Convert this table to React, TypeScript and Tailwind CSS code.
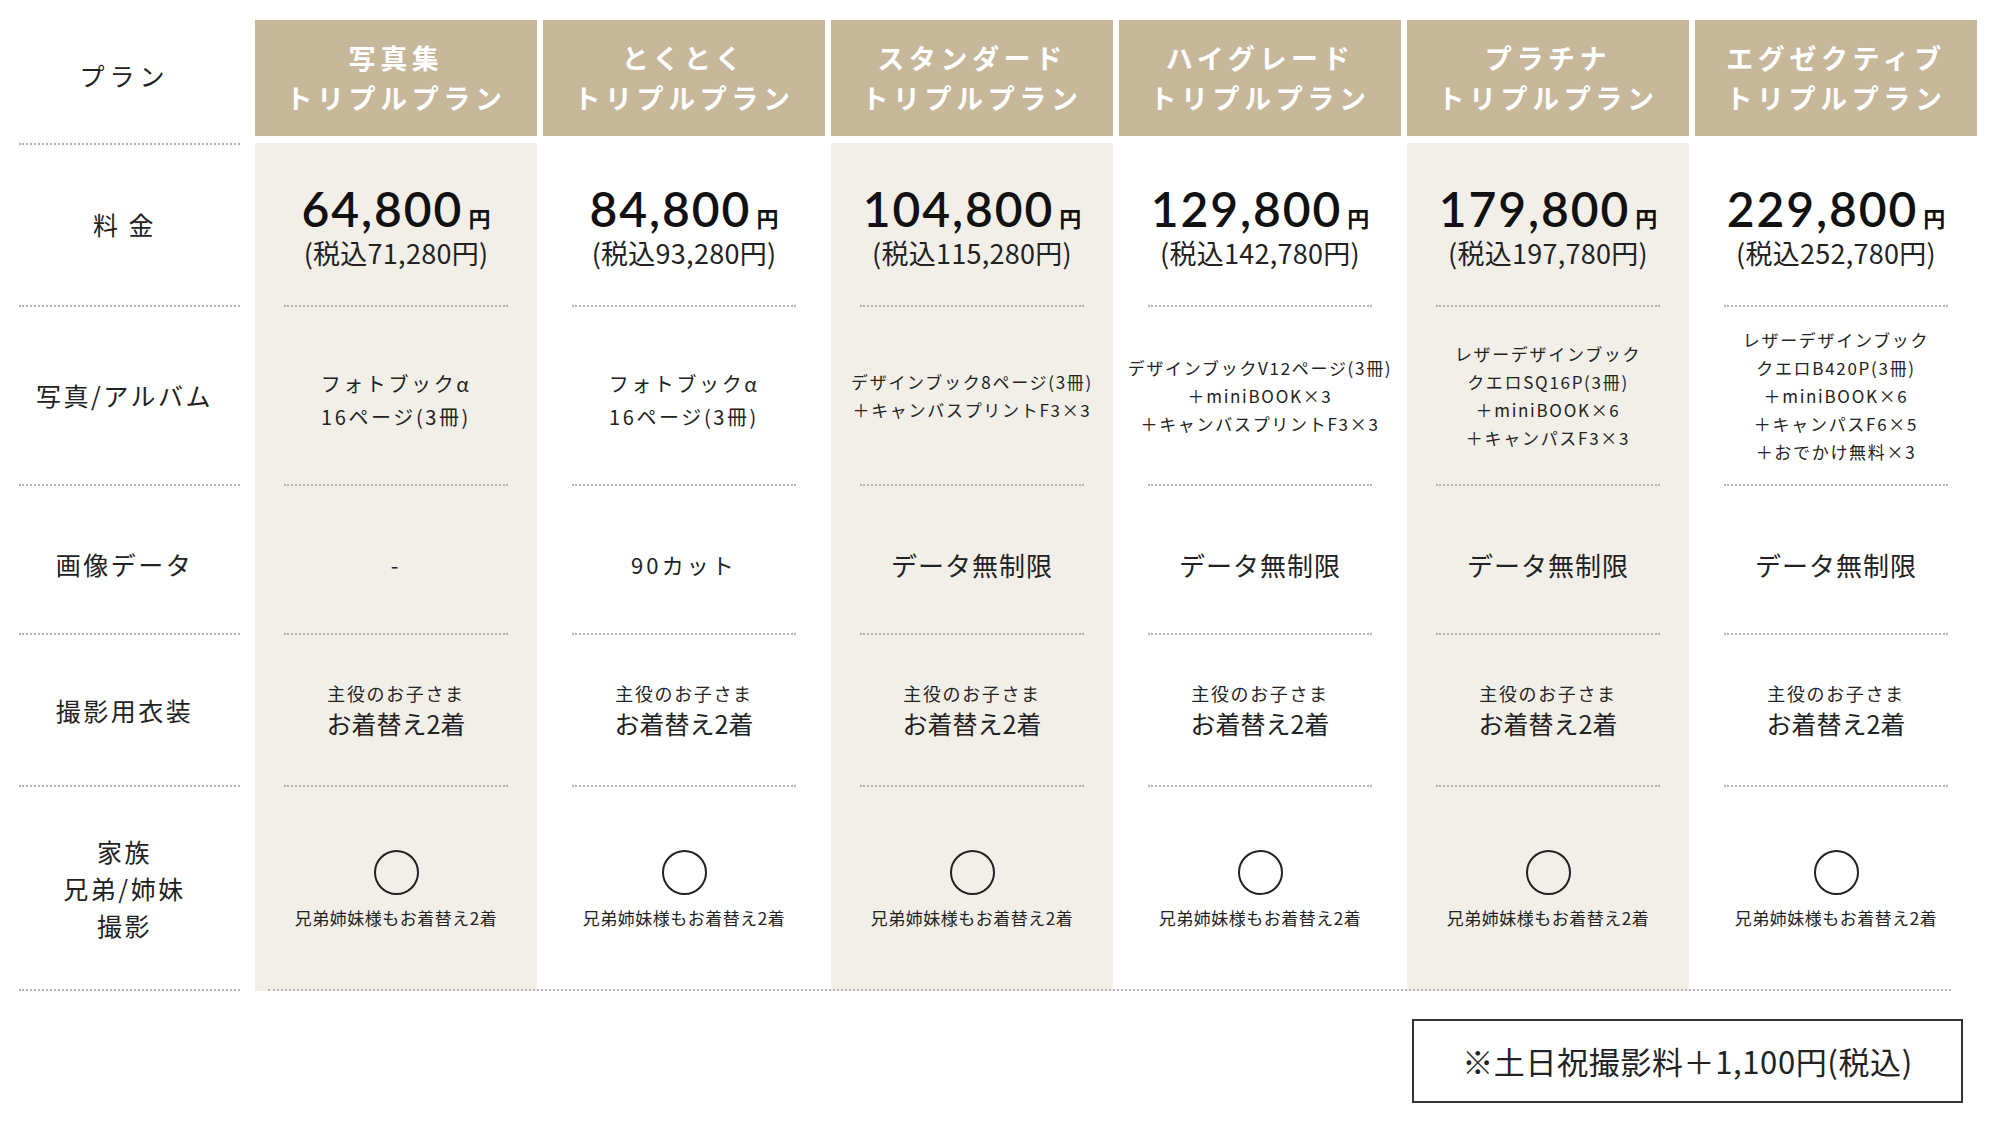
import React from "react";

interface Plan {
  name: string;
  price: string;
  tax: string;
  album: string[];
  data: string;
  shaded: boolean;
}

const plans: Plan[] = [
  {
    name: "写真集",
    price: "64,800",
    tax: "(税込71,280円)",
    album: ["フォトブックα", "16ページ(3冊)"],
    data: "-",
    shaded: true,
  },
  {
    name: "とくとく",
    price: "84,800",
    tax: "(税込93,280円)",
    album: ["フォトブックα", "16ページ(3冊)"],
    data: "90カット",
    shaded: false,
  },
  {
    name: "スタンダード",
    price: "104,800",
    tax: "(税込115,280円)",
    album: ["デザインブック8ページ(3冊)", "＋キャンバスプリントF3×3"],
    data: "データ無制限",
    shaded: true,
  },
  {
    name: "ハイグレード",
    price: "129,800",
    tax: "(税込142,780円)",
    album: ["デザインブックV12ページ(3冊)", "＋miniBOOK×3", "＋キャンバスプリントF3×3"],
    data: "データ無制限",
    shaded: false,
  },
  {
    name: "プラチナ",
    price: "179,800",
    tax: "(税込197,780円)",
    album: ["レザーデザインブック", "クエロSQ16P(3冊)", "＋miniBOOK×6", "＋キャンパスF3×3"],
    data: "データ無制限",
    shaded: true,
  },
  {
    name: "エグゼクティブ",
    price: "229,800",
    tax: "(税込252,780円)",
    album: [
      "レザーデザインブック",
      "クエロB420P(3冊)",
      "＋miniBOOK×6",
      "＋キャンパスF6×5",
      "＋おでかけ無料×3",
    ],
    data: "データ無制限",
    shaded: false,
  },
];

const jp = "font-['Noto_Sans_CJK_JP','Noto_Sans',sans-serif]";
const cols = "grid grid-cols-[249px_repeat(6,282px)] gap-x-[6px]";
const dots = "border-t-2 border-dotted border-[#b3b3b3]";

function LabelCell({ h, children }: { h: string; children: React.ReactNode }) {
  return (
    <div className={`flex flex-col ${h}`}>
      <div className="flex flex-1 flex-col items-center justify-center text-[25px] leading-[37px] tracking-[0.1em] text-[#222]">
        {children}
      </div>
      <div className={`ml-[19px] mr-[9px] ${dots}`} />
    </div>
  );
}

function PlanCell({
  plan,
  last,
  children,
}: {
  plan: Plan;
  last?: boolean;
  children: React.ReactNode;
}) {
  return (
    <div className={`flex flex-col ${plan.shaded ? "bg-[#f2efe9]" : ""}`}>
      <div className="flex flex-1 flex-col items-center justify-center text-center text-[#222]">
        {children}
      </div>
      {!last && <div className={`mx-[29px] ${dots}`} />}
    </div>
  );
}

export default function App() {
  return (
    <div className={`min-h-[1137px] w-[2000px] bg-white pt-[20px] ${jp}`}>
      {/* header */}
      <div className={`${cols} h-[116px]`}>
        <div className="flex items-center justify-center pb-[4px] text-[25px] tracking-[0.2em] text-[#222]">
          プラン
        </div>
        {plans.map((p) => (
          <div
            key={p.name}
            className="flex flex-col items-center justify-center bg-[#c7b79b] text-[27px] font-bold leading-[40px] tracking-[0.17em] text-white"
          >
            <span>{p.name}</span>
            <span>トリプルプラン</span>
          </div>
        ))}
      </div>

      <div className={`${cols} mt-[7px]`}>
        <div className={`ml-[19px] mr-[9px] ${dots}`} />
      </div>

      {/* price */}
      <div className={`${cols} h-[164px] -mt-[2px]`}>
        <LabelCell h="h-[164px]">
          <span>料 金</span>
        </LabelCell>
        {plans.map((p) => (
          <PlanCell key={p.name} plan={p}>
            <div className="flex flex-col items-center pt-[12px]">
              <div className="flex items-baseline">
                <span className="font-['Lato','Noto_Sans',sans-serif] text-[48px] font-semibold leading-[46px] tracking-[0.04em] text-[#111]">
                  {p.price}
                </span>
                <span className="ml-[5px] text-[22px] font-bold leading-[22px] text-[#111]">円</span>
              </div>
              <span className="text-[27px] leading-[42px] tracking-[0.01em] text-[#222]">
                {p.tax}
              </span>
            </div>
          </PlanCell>
        ))}
      </div>

      {/* photo / album */}
      <div className={`${cols} h-[179px]`}>
        <LabelCell h="h-[179px]">写真/アルバム</LabelCell>
        {plans.map((p) => (
          <PlanCell key={p.name} plan={p}>
            {p.album[0] === "フォトブックα" ? (
              <div className="pt-[8px] text-[20px] leading-[33px] tracking-[0.13em]">
                {p.album.map((l) => (
                  <div key={l}>{l}</div>
                ))}
              </div>
            ) : (
              <div className="text-[17px] leading-[28px] tracking-[0.1em]">
                {p.album.map((l) => (
                  <div key={l}>{l}</div>
                ))}
              </div>
            )}
          </PlanCell>
        ))}
      </div>

      {/* image data */}
      <div className={`${cols} h-[149px]`}>
        <LabelCell h="h-[149px]">
          <span className="pt-[10px]">画像データ</span>
        </LabelCell>
        {plans.map((p) => (
          <PlanCell key={p.name} plan={p}>
            <span
              className={`pt-[10px] ${
                p.data === "データ無制限"
                  ? "text-[26px] tracking-[0.04em]"
                  : "text-[22px] tracking-[0.14em]"
              }`}
            >
              {p.data}
            </span>
          </PlanCell>
        ))}
      </div>

      {/* costume */}
      <div className={`${cols} h-[152px]`}>
        <LabelCell h="h-[152px]">撮影用衣装</LabelCell>
        {plans.map((p) => (
          <PlanCell key={p.name} plan={p}>
            <span className="text-[18px] leading-[26px] tracking-[0.09em]">主役のお子さま</span>
            <span className="text-[25px] leading-[34px]">お着替え2着</span>
          </PlanCell>
        ))}
      </div>

      {/* family */}
      <div className={`${cols} h-[204px]`}>
        <LabelCell h="h-[204px]">
          <span>家族</span>
          <span>兄弟/姉妹</span>
          <span>撮影</span>
        </LabelCell>
        {plans.map((p) => (
          <PlanCell key={p.name} plan={p} last>
            <div className="h-[45px] w-[45px] rounded-full border-2 border-[#222]" />
            <span className="mt-[12px] text-[17px] leading-[22px] tracking-[0.03em]">
              兄弟姉妹様もお着替え2着
            </span>
          </PlanCell>
        ))}
      </div>

      <div className="-mt-[2px] flex">
        <div className={`ml-[268px] w-[1683px] ${dots}`} />
      </div>

      <div className="mr-[37px] mt-[28px] flex justify-end">
        <div className="flex h-[84px] w-[551px] items-center justify-center border-2 border-[#333] text-[31px] tracking-[0.02em] text-[#222]">
          ※土日祝撮影料＋1,100円(税込)
        </div>
      </div>
    </div>
  );
}
